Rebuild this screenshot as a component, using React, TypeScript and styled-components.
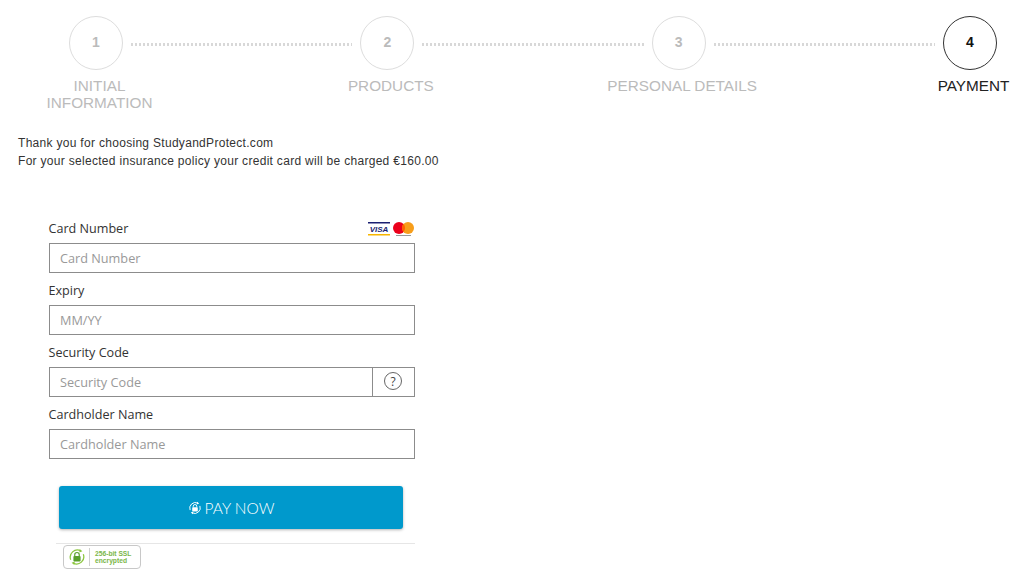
import React from 'react';
import styled, { createGlobalStyle } from 'styled-components';

const GlobalStyle = createGlobalStyle`
  html, body {
    margin: 0;
    padding: 0;
    background: #fff;
    font-family: "Liberation Sans", Arial, sans-serif;
  }
`;

const Page = styled.div`
  width: 1024px;
  height: 574px;
  overflow: hidden;
  box-sizing: border-box;
  padding-top: 16px;
`;

const Stepper = styled.div`
  display: flex;
  padding: 0 27px 0 69px;
  height: 108px;
`;

const Step = styled.div`
  width: 54px;
  flex-shrink: 0;
  display: flex;
  flex-direction: column;
  align-items: center;
`;

const Circle = styled.div<{ $active?: boolean }>`
  width: 54px;
  height: 54px;
  flex-shrink: 0;
  box-sizing: border-box;
  padding-bottom: 2px;
  border-radius: 50%;
  border: 1px solid ${p => (p.$active ? '#333' : '#ddd')};
  display: flex;
  align-items: center;
  justify-content: center;
  font-size: 14px;
  font-weight: 700;
  color: ${p => (p.$active ? '#111' : '#bbb')};
`;

const StepLabel = styled.div<{ $active?: boolean }>`
  width: 170px;
  flex-shrink: 0;
  margin: 7px 0 0 7px;
  text-align: center;
  font-size: 15.3px;
  line-height: 17px;
  color: ${p => (p.$active ? '#222' : '#bbb')};
`;

const Connector = styled.div`
  flex: 1;
  height: 3px;
  margin: 27px 8px 0;
  background: repeating-linear-gradient(90deg, #d8d8d8 0 2px, transparent 2px 4px);
`;

const Intro = styled.div`
  margin: 10px 0 0 18px;
  font-size: 12px;
  letter-spacing: 0.3px;
  line-height: 18px;
  color: #333;
`;

const Form = styled.form`
  width: 365.5px;
  margin: 49px 0 0 49px;
  font-family: "Open Sans", sans-serif;
`;

const Field = styled.div`
  margin-bottom: 8px;
`;

const LabelRow = styled.div`
  display: flex;
  justify-content: space-between;
  align-items: flex-start;
  height: 24px;
`;

const Label = styled.label`
  margin: 1px 0 0 -0.5px;
  font-size: 12.6px;
  line-height: 17px;
  color: #333;
`;

const InputBox = styled.div`
  display: flex;
  height: 30px;
  box-sizing: border-box;
  border: 1px solid #8c8c8c;
`;

const Input = styled.input`
  flex: 1;
  min-width: 0;
  border: 0;
  outline: 0;
  padding: 0 10px;
  font-family: "Open Sans", sans-serif;
  font-size: 12.7px;
  background: transparent;
  &::placeholder {
    color: #999;
    opacity: 1;
  }
`;

const HelpCell = styled.div`
  width: 41px;
  border-left: 1px solid #8c8c8c;
  display: flex;
  align-items: center;
  justify-content: center;
`;

const HelpMark = styled.div`
  width: 18px;
  height: 18px;
  margin-top: -2px;
  box-sizing: border-box;
  border: 1px solid #666;
  border-radius: 50%;
  display: flex;
  align-items: center;
  justify-content: center;
  font-size: 12px;
  color: #444;
`;

const PayButton = styled.button`
  display: flex;
  align-items: center;
  justify-content: center;
  gap: 3px;
  width: 344px;
  height: 43px;
  margin: 27px 0 0 10px;
  border: 0;
  border-radius: 3px;
  background: #0099cc;
  box-shadow: 0 1px 3px rgba(0, 0, 0, 0.3);
  color: #fff;
  font-family: Lato, sans-serif;
  font-size: 15.5px;
  font-weight: 300;
`;

const Footer = styled.div`
  margin: 14px 0 0 7px;
  padding: 1px 0 0 7px;
  border-top: 1px solid #e6e6e6;
`;

const SslBadge = styled.div`
  width: 78px;
  height: 24px;
  box-sizing: border-box;
  border: 1px solid #c8c8c8;
  border-radius: 4px;
  display: flex;
  align-items: center;
  padding-left: 4px;
`;

const SslDivider = styled.div`
  width: 1px;
  height: 18px;
  margin: 0 5px 0 3px;
  background: #d0d0d0;
`;

const SslText = styled.div`
  font-family: "Liberation Sans", sans-serif;
  font-size: 6.7px;
  line-height: 7px;
  font-weight: 700;
  color: #7ab648;
`;

const LogoSvg = styled.svg`
  margin-top: 2px;
`;

const CardLogos = () => (
  <LogoSvg width="48" height="16" viewBox="0 0 48 16">
    <rect x="1" y="1" width="22" height="1.5" fill="#1a1f71" />
    <text x="12" y="10.5" textAnchor="middle" fontFamily="Liberation Sans" fontSize="8" fontWeight="700" fontStyle="italic" fill="#1a1f71">VISA</text>
    <rect x="1" y="13" width="22" height="1.5" fill="#f7b600" />
    <circle cx="32" cy="7" r="6" fill="#eb001b" />
    <circle cx="41" cy="7" r="6" fill="#f79e1b" />
    <path d="M36.5 3 a6 6 0 0 1 0 8 a6 6 0 0 1 0 -8 z" fill="#ff5f00" />
    <rect x="29" y="14" width="15" height="1" fill="#999" />
  </LogoSvg>
);

const LockIcon = ({ color, size, body }: { color: string; size: number; body: string }) => (
  <svg width={size} height={size} viewBox="0 0 20 20" fill="none">
    <path d="M3 13 A8 8 0 0 1 14 3" stroke={color} strokeWidth="1.4" />
    <path d="M17 7 A8 8 0 0 1 6 17" stroke={color} strokeWidth="1.4" />
    <path d="M13 1 L16 3.5 L12.5 5 Z M7 19 L4 16.5 L7.5 15 Z" fill={color} />
    <path d="M7.5 9 V7.5 a2.5 2.5 0 0 1 5 0 V9" stroke={body} strokeWidth="1.3" />
    <rect x="6" y="9" width="8" height="6" rx="1" fill={body} />
  </svg>
);

const steps = [
  { n: 1, label: <>INITIAL<br />INFORMATION</> },
  { n: 2, label: 'PRODUCTS' },
  { n: 3, label: 'PERSONAL DETAILS' },
  { n: 4, label: 'PAYMENT', active: true },
];

export default function App() {
  return (
    <Page>
      <GlobalStyle />
      <Stepper>
        {steps.map((step, i) => (
          <React.Fragment key={step.n}>
            {i > 0 && <Connector />}
            <Step>
              <Circle $active={step.active}>{step.n}</Circle>
              <StepLabel $active={step.active}>{step.label}</StepLabel>
            </Step>
          </React.Fragment>
        ))}
      </Stepper>
      <Intro>
        Thank you for choosing StudyandProtect.com
        <br />
        For your selected insurance policy your credit card will be charged €160.00
      </Intro>
      <Form>
        <Field>
          <LabelRow>
            <Label>Card Number</Label>
            <CardLogos />
          </LabelRow>
          <InputBox><Input placeholder="Card Number" /></InputBox>
        </Field>
        <Field>
          <LabelRow><Label>Expiry</Label></LabelRow>
          <InputBox><Input placeholder="MM/YY" /></InputBox>
        </Field>
        <Field>
          <LabelRow><Label>Security Code</Label></LabelRow>
          <InputBox>
            <Input placeholder="Security Code" />
            <HelpCell><HelpMark>?</HelpMark></HelpCell>
          </InputBox>
        </Field>
        <Field>
          <LabelRow><Label>Cardholder Name</Label></LabelRow>
          <InputBox><Input placeholder="Cardholder Name" /></InputBox>
        </Field>
        <PayButton type="button">
          <LockIcon color="#fff" body="#fff" size={14} />
          PAY NOW
        </PayButton>
        <Footer>
          <SslBadge>
            <LockIcon color="#8cc63f" body="#5aa02c" size={18} />
            <SslDivider />
            <SslText>256-bit SSL<br />encrypted</SslText>
          </SslBadge>
        </Footer>
      </Form>
    </Page>
  );
}
